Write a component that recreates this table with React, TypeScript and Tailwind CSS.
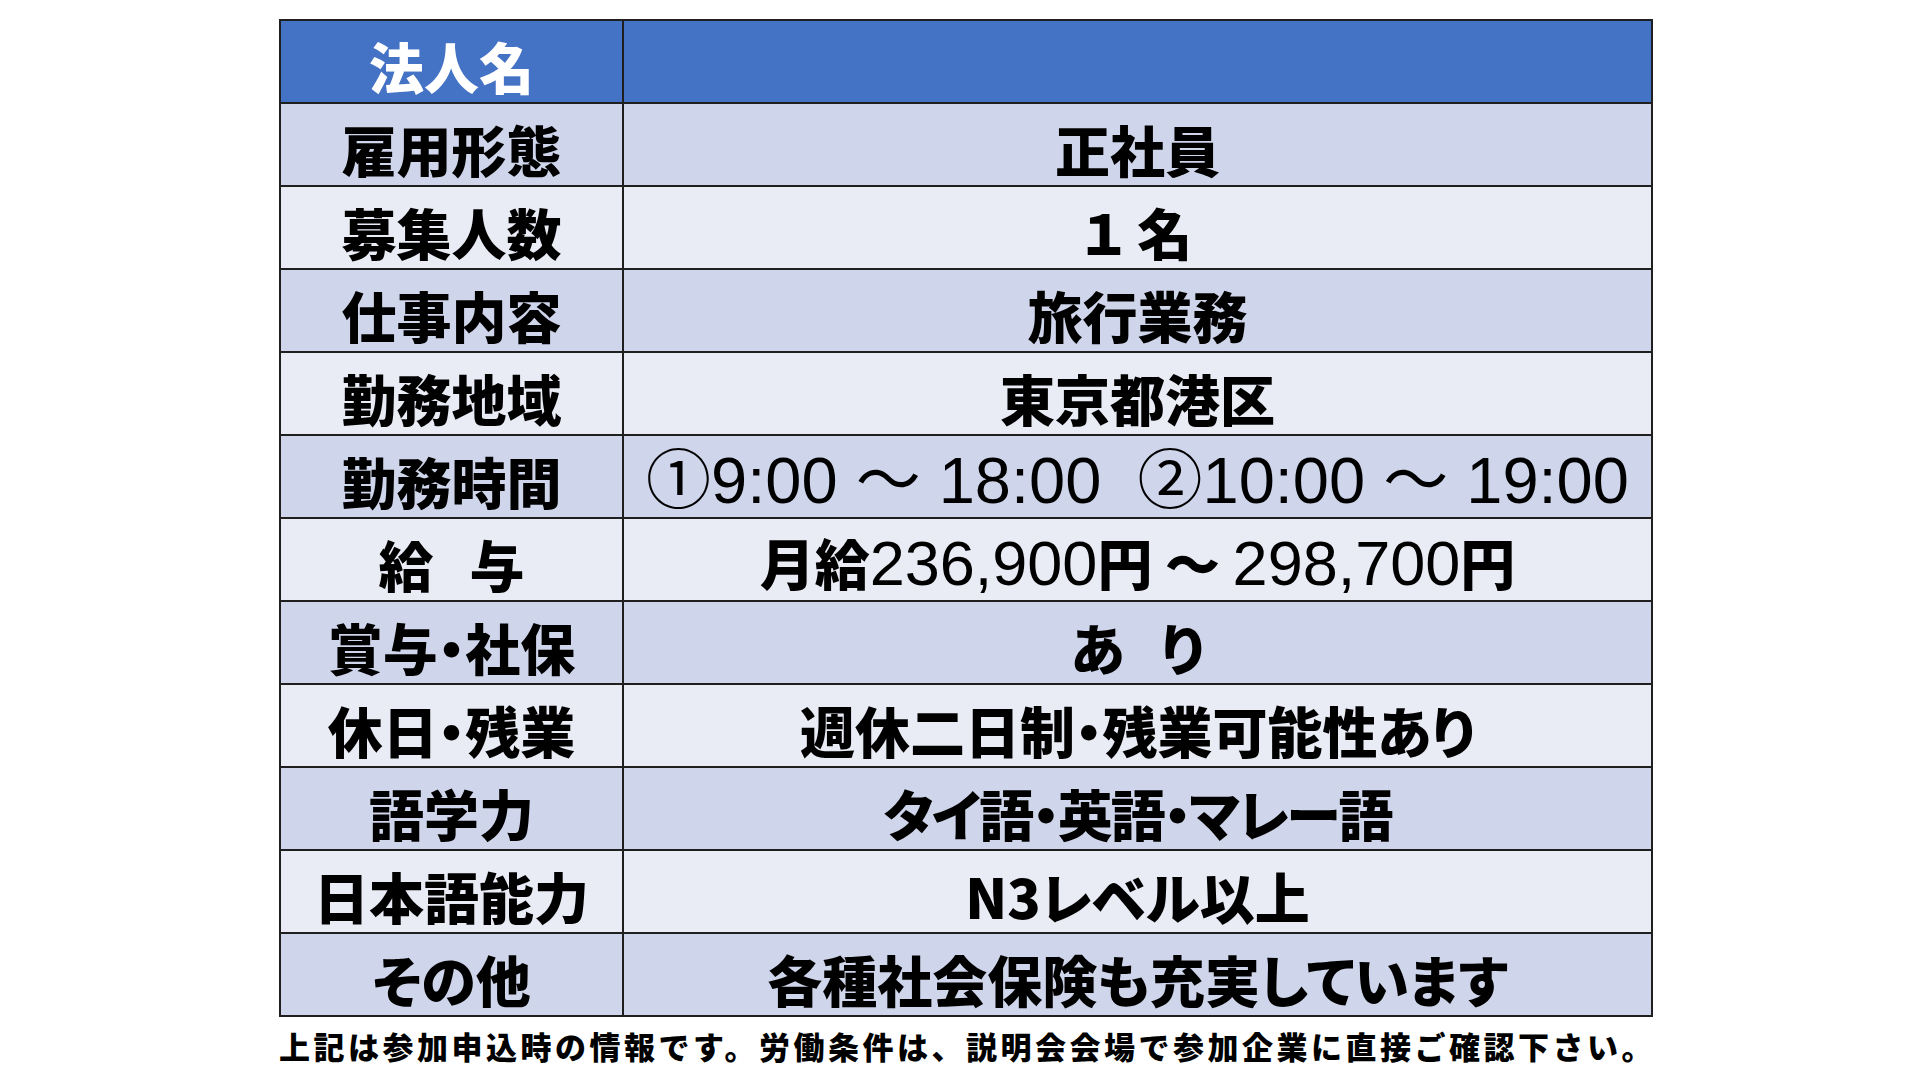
const jp = "font-['Noto_Sans_CJK_JP',sans-serif] font-black [font-feature-settings:'palt']";
const num = "font-['Liberation_Sans_Narrow','Liberation_Sans',sans-serif] text-[63px] font-normal";

type Row = { label: React.ReactNode; key: string; value: React.ReactNode; tone: "a" | "b"; tight?: boolean };

const gap = <span className="inline-block w-[36px]" />;

const rows: Row[] = [
  { key: "koyo", label: "雇用形態", value: "正社員", tone: "a" },
  { key: "boshu", label: "募集人数", value: "１ 名", tone: "b" },
  { key: "shigoto", label: "仕事内容", value: "旅行業務", tone: "a" },
  { key: "chiiki", label: "勤務地域", value: "東京都港区", tone: "b" },
  {
    key: "jikan",
    label: "勤務時間",
    value: (
      <span className="whitespace-pre font-['Liberation_Sans','Noto_Sans_CJK_JP',sans-serif] text-[65px] font-normal">
        ①9:00 ～ 18:00  ②10:00 ～ 19:00
      </span>
    ),
    tone: "a",
  },
  {
    key: "kyuyo",
    label: (
      <>
        給{gap}与
      </>
    ),
    value: (
      <span className="whitespace-pre">
        月給<span className={num}>236,900</span>円{" ～ "}
        <span className={num}>298,700</span>円
      </span>
    ),
    tone: "b",
  },
  {
    key: "shoyo",
    label: "賞与・社保",
    value: (
      <>
        あ{gap}り
      </>
    ),
    tone: "a",
  },
  { key: "kyujitsu", label: "休日・残業", value: "週休二日制・残業可能性あり", tone: "b" },
  { key: "gogaku", label: "語学力", value: "タイ語・英語・マレー語", tone: "a", tight: true },
  { key: "nihongo", label: "日本語能力", value: "N3レベル以上", tone: "b" },
  { key: "sonota", label: "その他", value: "各種社会保険も充実しています", tone: "a" },
];

export default function App() {
  return (
    <div className="h-[1080px] w-[1920px] overflow-hidden bg-white pl-[279px] pt-[19px]">
      <table className="w-[1374px] table-fixed border-collapse border-2 border-[#1f1f1f]">
        <colgroup>
          <col className="w-[343px]" />
          <col />
        </colgroup>
        <tbody>
          <tr className="h-[83px] bg-[#4472c4]">
            <td className="border-2 border-[#1f1f1f] p-0">
              <div className={`${jp} pt-2 text-center text-[55px] leading-none text-white`}>法人名</div>
            </td>
            <td className="border-2 border-[#1f1f1f] p-0" />
          </tr>
          {rows.map((row) => (
            <tr
              key={row.key}
              className={row.tone === "a" ? "h-[83px] bg-[#cfd5ea]" : "h-[83px] bg-[#e9ebf5]"}
            >
              <td className="border-2 border-[#1f1f1f] p-0">
                <div className={`${jp} pt-2 text-center text-[55px] leading-none text-black`}>{row.label}</div>
              </td>
              <td className="border-2 border-[#1f1f1f] p-0">
                <div
                  className={`${jp} pt-2 text-center text-[55px] leading-none text-black ${
                    row.tight ? "tracking-[-2px]" : ""
                  }`}
                >
                  {row.value}
                </div>
              </td>
            </tr>
          ))}
        </tbody>
      </table>
      <p className="mt-[13px] font-['Noto_Sans_CJK_JP',sans-serif] text-[31px] font-black leading-none tracking-[3.5px] text-black">
        上記は参加申込時の情報です。労働条件は、説明会会場で参加企業に直接ご確認下さい。
      </p>
    </div>
  );
}
